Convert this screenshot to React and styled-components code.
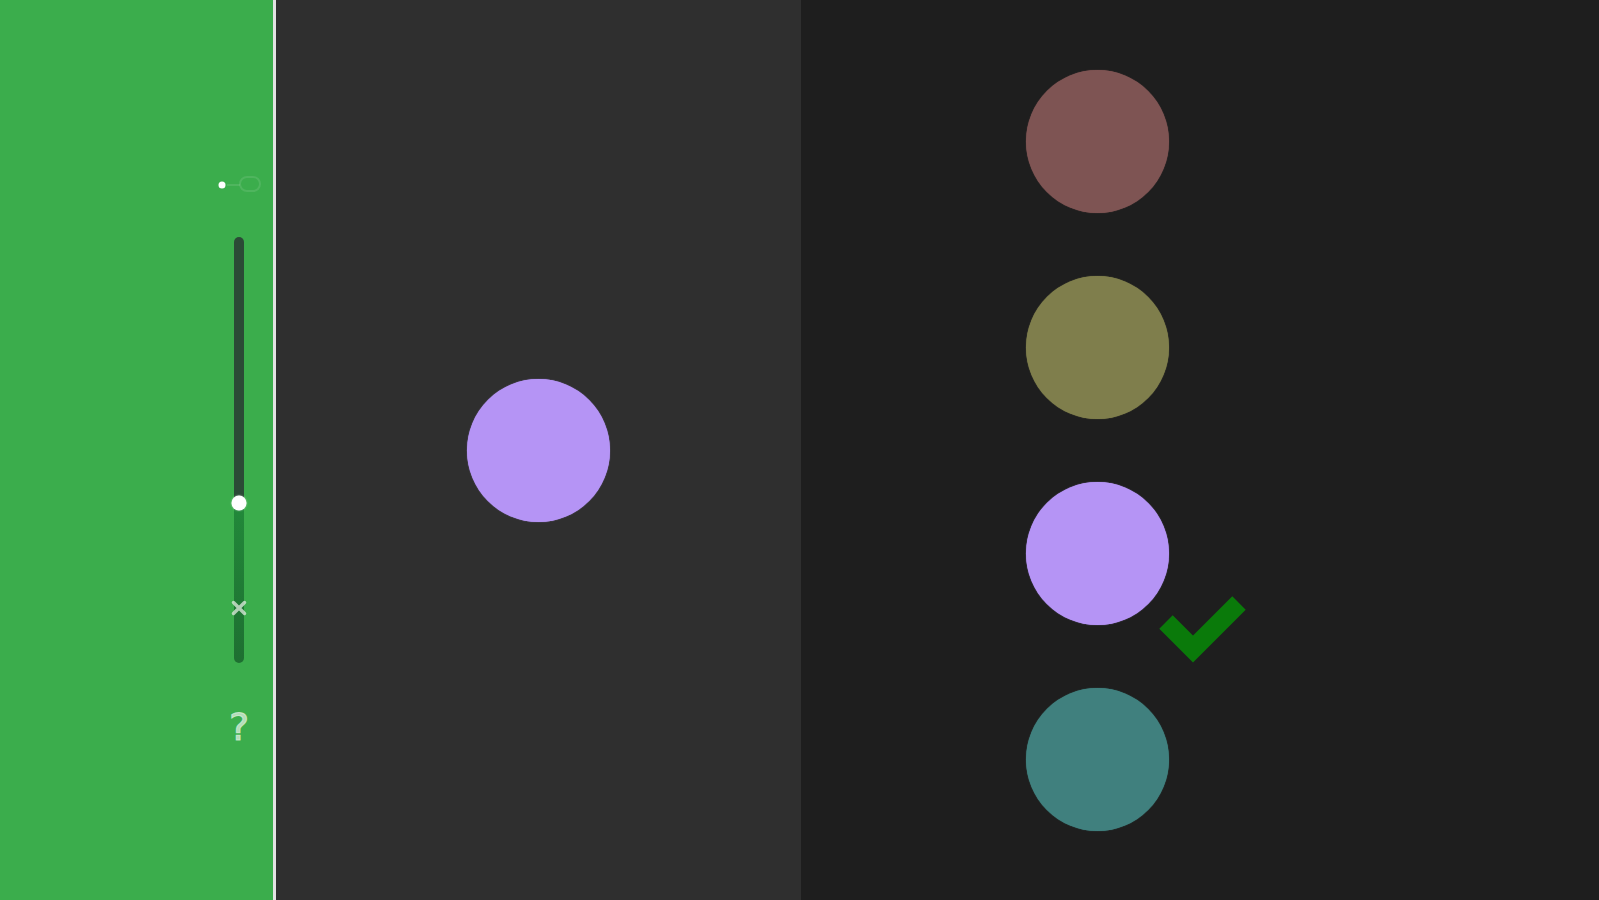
import React from 'react';
import styled, { createGlobalStyle } from 'styled-components';

const GlobalStyle = createGlobalStyle`
  html, body, #root {
    margin: 0;
    padding: 0;
    height: 100%;
  }

  body {
    font-family: "DejaVu Sans", "Liberation Sans", sans-serif;
    background: #1e1e1e;
    overflow: hidden;
  }
`;

const Layout = styled.div`
  display: flex;
  height: 100vh;
  width: 100%;
`;

const Sidebar = styled.aside`
  box-sizing: border-box;
  width: 276px;
  flex: none;
  display: flex;
  justify-content: flex-end;
  background: #3bad4c;
  border-right: 3px solid #e2e2e2;
  box-shadow: 1px 0 0 #8a8a8a;
`;

const Controls = styled.div`
  width: 40px;
  margin-right: 14px;
  padding-top: 172px;
  display: flex;
  flex-direction: column;
  align-items: center;
`;

const LinkIcon = styled.svg`
  display: block;
  margin-left: 2px;
`;

const Track = styled.div`
  position: relative;
  margin-top: 41px;
  width: 10px;
  height: 426px;
  border-radius: 5px;
  background: linear-gradient(
    to bottom,
    #2b4a36 0%,
    #2b4a36 ${({ $value }) => $value}%,
    #22893a ${({ $value }) => $value}%,
    #1e6f31 100%
  );
`;

const Thumb = styled.div`
  position: absolute;
  left: 50%;
  top: ${({ $value }) => $value}%;
  width: 15px;
  height: 15px;
  border-radius: 50%;
  background: #ffffff;
  transform: translate(-50%, -50%);
  box-shadow: 0 0 2px rgba(255, 255, 255, 0.6);
`;

const Cross = styled.span`
  position: absolute;
  left: 50%;
  top: ${({ $at }) => $at}%;
  transform: translate(-50%, -50%);
  display: flex;
`;

const Help = styled.div`
  margin-top: 43px;
  font-size: 38px;
  line-height: 42px;
  font-weight: 400;
  color: rgba(220, 238, 220, 0.75);
  -webkit-text-stroke: 1px rgba(220, 238, 220, 0.75);
`;

const Stage = styled.section`
  width: 525px;
  flex: none;
  background: #2f2f2f;
  display: flex;
  align-items: center;
  justify-content: center;
`;

const Palette = styled.section`
  flex: 1;
  background: #1e1e1e;
  padding-left: 225px;
  display: flex;
  flex-direction: column;
  justify-content: center;
  gap: 63px;
`;

const Swatch = styled.div`
  position: relative;
  width: 143px;
  height: 143px;
  border-radius: 50%;
  background: ${({ $color }) => $color};
  box-shadow: 0 0 1px ${({ $color }) => $color};
`;

const Check = styled.svg`
  position: absolute;
  left: 133px;
  top: 114px;
`;

const colors = ['#7e5453', '#7f7e4c', '#b594f5', '#40807e'];
const selected = 2;

const App = () => {
  return (
    <>
      <GlobalStyle />
      <Layout>
        <Sidebar>
          <Controls>
            <LinkIcon width="48" height="24" viewBox="0 0 48 24">
              <circle cx="6" cy="13" r="3.5" fill="#ffffff" />
              <path d="M11 13 H24" stroke="rgba(255,255,255,0.1)" strokeWidth="2" fill="none" />
              <rect x="24" y="5" width="20" height="14" rx="7" stroke="rgba(255,255,255,0.1)" strokeWidth="2" fill="none" />
            </LinkIcon>
            <Track $value={62.4}>
              <Cross $at={87}>
                <svg width="18" height="18" viewBox="0 0 18 18">
                  <path d="M3.5 3.5 L14.5 14.5 M14.5 3.5 L3.5 14.5" stroke="rgba(215,230,215,0.8)" strokeWidth="3.5" strokeLinecap="round" />
                </svg>
              </Cross>
              <Thumb $value={62.4} />
            </Track>
            <Help>?</Help>
          </Controls>
        </Sidebar>
        <Stage>
          <Swatch $color={colors[selected]} />
        </Stage>
        <Palette>
          {colors.map((c, i) => (
            <Swatch key={c} $color={c}>
              {i === selected && (
                <Check width="88" height="68" viewBox="0 0 88 68">
                  <path d="M7 26 L34 53 L80 7" stroke="#0a7a0a" strokeWidth="19" strokeLinecap="butt" strokeLinejoin="miter" fill="none" />
                </Check>
              )}
            </Swatch>
          ))}
        </Palette>
      </Layout>
    </>
  );
};

export default App;
